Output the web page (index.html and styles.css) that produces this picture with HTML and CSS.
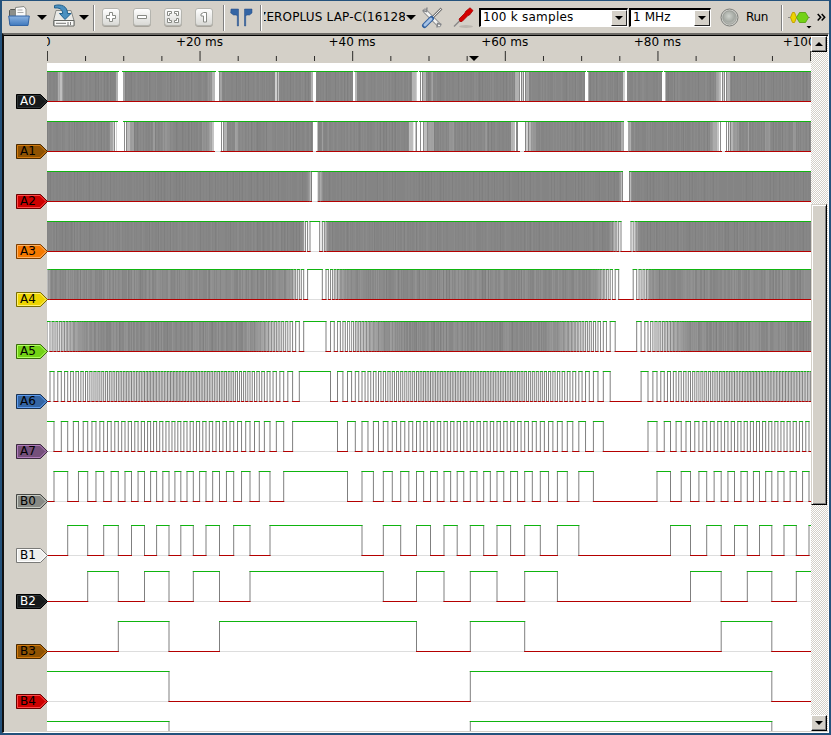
FILE: index.html
```html
<!DOCTYPE html>
<html lang="en">
<head>
<meta charset="utf-8">
<title>Logic analyzer</title>
<link rel="stylesheet" href="styles.css">
</head>
<body>
<div class="window">
  <div class="toolbar">
    <svg class="ico open" width="22" height="24" viewBox="0 0 22 24">
      <defs>
        <linearGradient id="gb" x1="0" y1="0" x2="0" y2="1"><stop offset="0" stop-color="#8db4e2"/><stop offset="1" stop-color="#3f78bd"/></linearGradient>
        <linearGradient id="gw" x1="0" y1="0" x2="0" y2="1"><stop offset="0" stop-color="#fff"/><stop offset="1" stop-color="#d8d8d4"/></linearGradient>
        <radialGradient id="gr" cx=".45" cy=".4" r=".6"><stop offset="0" stop-color="#ced2cc"/><stop offset=".7" stop-color="#a4a8a2"/><stop offset="1" stop-color="#bfc1bc"/></radialGradient>
      </defs>
      <path d="M1.500 19V5.500l1-1h6V7h9v12z" fill="#8c8e8a" stroke="#555753"/>
      <path d="M7.500 12V2.500L16 1.500l2 2.500V12z" fill="#fafafa" stroke="#888a85"/>
      <path d="M9.500 5h5M9.500 7.500h6" stroke="#aaa"/>
      <path d="M2 20.500L.7 11h20.600L20 20.500z" fill="url(#gb)" stroke="#3465a4" stroke-linejoin="round"/>
    </svg>
    <span class="caret c1"></span>
    <svg class="ico save" width="24" height="24" viewBox="0 0 24 24">
      <path d="M4 6.500h15l3 10v5H1.500v-5z" fill="#e9e9e6" stroke="#888a86"/>
      <path d="M2 16.500h20v5.500H2z" fill="#f8f8f6" stroke="#666864"/>
      <path d="M4 19.300h10M16 18v4M18.500 18v3" stroke="#777" stroke-width="1"/>
      <path d="M2.500 1.500C9-.2 15.500 2 15.500 9.500H19L13 15.500 7.500 9.500h3.200C10.500 5 7 3.500 2.500 4z" fill="#4a90c0" stroke="#20608c"/>
    </svg>
    <span class="caret c2"></span>
    <i class="sep s1"></i>
    <svg class="btn b1" width="18" height="18"><rect x=".5" y=".5" width="17" height="17" rx="2.500" fill="url(#gw)" stroke="#b4b4ae"/><path d="M7.500 4.500h3v3h3v3h-3v3h-3v-3h-3v-3h3z" fill="#fff" stroke="#888a85"/></svg>
    <svg class="btn b2" width="18" height="18"><rect x=".5" y=".5" width="17" height="17" rx="2.500" fill="url(#gw)" stroke="#b4b4ae"/><path d="M4.500 7.500h9v3h-9z" fill="#fff" stroke="#888a85"/></svg>
    <svg class="btn b3" width="18" height="18"><rect x=".5" y=".5" width="17" height="17" rx="2.500" fill="url(#gw)" stroke="#b4b4ae"/><path d="M3.500 3.500h4v2h-2v2h-2zM10.500 3.500h4v4h-2v-2h-2zM3.500 10.500h2v2h2v2h-4zM12.500 10.500h2v4h-4v-2h2z" fill="#fff" stroke="#888a85"/></svg>
    <svg class="btn b4" width="18" height="18"><rect x=".5" y=".5" width="17" height="17" rx="2.500" fill="url(#gw)" stroke="#b4b4ae"/><path d="M6 6l2.500-1.500h3v9.500h-3V8H6z" fill="#fff" stroke="#888a85"/></svg>
    <i class="sep s2"></i>
    <svg class="ico cur" width="23" height="20"><path d="M1 1h7.500v17H7.300V8.500L6.500 7H3.500L.7 5zM22 1h-7.500v17h1.200V8.500L16.500 7h3L22 5z" fill="#3465a4" stroke="#204a87" stroke-width=".5"/></svg>
    <i class="sep s3"></i>
    <div class="device"><span>ZEROPLUS LAP-C(16128)</span></div>
    <span class="caret c3"></span>
    <svg class="ico tools" width="22" height="22" viewBox="0 0 22 22">
      <path d="M4 4L18 18" stroke="#85878a" stroke-width="4.500" stroke-linecap="round"/>
      <path d="M4 4L18 18" stroke="#f2f2f0" stroke-width="2.600" stroke-linecap="round"/>
      <path d="M1.500 3.500l4 1 .5-4M20.500 17.500l-4-1-.5 4" fill="none" stroke="#85878a" stroke-width="1.500"/>
      <path d="M20.500 1.500L11 11" stroke="#777" stroke-width="2.600"/><path d="M20 2L11 11" stroke="#eee" stroke-width="1"/>
      <path d="M10.500 11.500L3.500 18.500" stroke="#2f5f9f" stroke-width="5" stroke-linecap="round"/>
      <path d="M10 12L4 18" stroke="#a5c2e6" stroke-width="3" stroke-linecap="round"/>
    </svg>
    <svg class="ico probe" width="21" height="22" viewBox="0 0 21 22">
      <ellipse cx="13" cy="19.500" rx="7" ry="1.500" fill="#bbb7b0"/>
      <path d="M1 19.500L9 11.500" stroke="#888" stroke-width="1.500"/>
      <path d="M7 14.500l-1-2.500 6-6 .5-1.500L17 .8 20 3.500 16.500 8l-1.500.5-6 6z" fill="#d40000" stroke="#a40000" stroke-width=".8"/>
    </svg>
    <div class="combo samples"><span>100 k samples</span><b><i class="caret"></i></b></div>
    <div class="combo rate"><span>1 MHz</span><b><i class="caret"></i></b></div>
    <svg class="ico led" width="19" height="19"><circle cx="9.500" cy="9.500" r="8.500" fill="#d2d2ce" stroke="#7c7e7a"/><circle cx="9.500" cy="9.500" r="6.800" fill="url(#gr)" stroke="#8d908a" stroke-width=".7"/></svg>
    <span class="run">Run</span>
    <i class="sep s4"></i>
    <svg class="ico dec" width="23" height="18"><path d="M0 6.500h22" stroke="#888"/><path d="M2.500 6.500l2-5h2l2 5-2 5h-2z" fill="#edd400" stroke="#c4a000"/><path d="M8.500 6.500l3-5h6l3 5-3 5h-6z" fill="#73d216" stroke="#4e9a06" stroke-width=".8"/><path d="M18.500 15h5l-2.500 2.500z" fill="#000"/></svg>
    <svg class="ico more" width="9" height="9"><path d="M.7 1l3 3.200-3 3.300M4.700 1l3 3.200-3 3.300" fill="none" stroke="#000" stroke-width="1.500"/></svg>
  </div>
  <div class="view">
    <div class="trace">
      <svg class="ruler" id="ruler" width="764" height="27"></svg>
      <div class="channels" id="channels"></div>
    </div>
    <div class="scroll">
      <div class="arrow"><i class="up"></i></div>
      <div class="thumb"></div>
      <div class="arrow end"><i class="caret"></i></div>
    </div>
  </div>
</div>
<script src="script.js"></script>
</body>
</html>
```
FILE: styles.css
```css
* { box-sizing: border-box; }
body { margin: 0; font: 12px "DejaVu Sans", sans-serif; color: #000; overflow: hidden; }
.window { width: 831px; height: 735px; background: #d4d0c8; border: 2px solid #24527c; border-top-width: 1px; display: flex; flex-direction: column; }
.toolbar { height: 32px; display: flex; align-items: center; flex: none; }
.toolbar > * { flex: none; }
svg { display: block; }
.caret { width: 0; height: 0; border: 5px solid transparent; border-top-color: #000; border-bottom: 0; display: block; }
.open { margin-left: 6px; margin-top: -1px; }
.c1 { margin-left: 7px; }
.save { margin-left: 5px; margin-top: -2px; }
.c2 { margin-left: 3px; }
.sep { width: 2px; height: 26px; background: #808080; border-right: 1px solid #fff; margin-top: 2px; }
.s1 { margin-left: 4px; }
.b1 { margin-left: 7px; }
.b2, .b3, .b4 { margin-left: 13px; }
.btn { filter: drop-shadow(0 1px 0 #a8a49c); }
.s2 { margin-left: 10px; }
.cur { margin-left: 5px; margin-top: 2px; }
.s3 { margin-left: 7px; }
.device { margin-left: 2px; width: 141px; overflow: hidden; white-space: nowrap; height: 16px; line-height: 16px; letter-spacing: .16px; }
.device span { margin-left: -6px; }
.c3 { margin-left: 1px; }
.tools { margin-left: 5px; margin-top: 1px; }
.probe { margin-left: 10px; margin-top: 1px; }
.combo { height: 19px; border: 2px solid #000; border-color: #000 #fff #fff #000; border-width: 2px 1px 1px 2px; background: #fff; display: flex; justify-content: space-between; margin-top: 1px; white-space: nowrap; line-height: 15px; padding-left: 2px; }
.combo b { width: 16px; background: #d4d0c8; border: 1px solid; border-color: #fff #222 #222 #fff; display: flex; align-items: center; justify-content: center; }
.combo .caret { border-width: 4px; border-bottom: 0; }
.samples { margin-left: 5px; width: 149px; letter-spacing: .25px; }
.rate { margin-left: 1px; width: 82px; letter-spacing: .1px; }
.led { margin-left: 9px; }
.run { margin-left: 7px; width: 25px; letter-spacing: -.3px; }
.s4 { margin-left: 10px; }
.dec { margin-left: 5px; margin-top: 5px; overflow: visible; }
.more { margin-left: 6px; }
.view { flex: 1; min-height: 0; display: flex; border-top: 2px solid #6d6b67; border-left: 2px solid #111; box-shadow: inset 0 1px 0 #000; padding-top: 1px; border-right: 1px solid #fff; border-bottom: 1px solid #fff; }
.trace { width: 807px; display: flex; flex-direction: column; overflow: hidden; }
.ruler { margin-left: 43px; flex: none; overflow: hidden; }
.ruler text { font: 12px "DejaVu Sans", sans-serif; text-anchor: middle; }
.channels { flex: 1; min-height: 0; overflow: hidden; margin-bottom: 1px; background: linear-gradient(90deg, #d4d0c8 43px, #fff 43px); padding-top: 8px; display: flex; flex-direction: column; gap: 19px; }
.row { display: flex; align-items: flex-end; height: 31px; flex: none; }
.raised { margin-top: -2px; }
.lowered { margin-top: 2px; }
.lowered-more { margin-top: 4px; }
.raised-more { margin-top: -4px; }
.flag { width: 32px; height: 15px; margin: 0 -1px -7px 12px; position: relative; z-index: 1; overflow: visible; flex: none; }
.flag text { font: 12px "DejaVu Sans", sans-serif; }
.wave { flex: none; overflow: hidden; }
.scroll { width: 17px; margin-bottom: 1px; display: flex; flex-direction: column; background: repeating-conic-gradient(#fff 0 25%, #d4d0c8 0 50%) 0 0 / 2px 2px; }
.arrow { height: 16px; width: 16px; background: #d4d0c8; border: 1px solid; border-color: #fff #000 #000 #fff; box-shadow: inset -1px -1px 0 #808080; display: flex; align-items: center; justify-content: center; }
.arrow.end { margin-top: auto; }
.arrow .caret { border-width: 4px; border-bottom: 0; }
.up { border: 4px solid transparent; border-bottom-color: #000; border-top: 0; }
.thumb { height: 301px; width: 16px; margin-top: 152px; background: #d4d0c8; border: 1px solid; border-color: #d4d0c8 #000 #000 #d4d0c8; box-shadow: inset 1px 1px 0 #fff, inset -1px -1px 0 #808080; }
```
FILE: script.js
```js
// 13-bit two's complement sine; every knot is [x, value].
const LEFT = 47, WIDTH = 764;
const segments = [
  // rising from trough
  [[14, -4096], [41, -3968], [46.5, -3940], [50, -3904], [54, -3840], [61.3, -3712], [67.7, -3584], [87.7, -3072], [103.7, -2560], [118.3, -2048], [131.5, -1536], [144.5, -1024], [156.6, -512], [169, 0], [180.8, 512], [193.3, 1024], [206, 1536], [219.5, 2048], [233.7, 2560], [250, 3072], [270, 3584], [283.7, 3840], [292.6, 3968], [299.3, 4032], [303.7, 4064], [307.6, 4080], [310, 4088], [315, 4096]],
  // falling from peak
  [[315, 4096], [319.7, 4088], [322.3, 4080], [326, 4064], [330.5, 4032], [337.5, 3968], [347.5, 3840], [362, 3584], [383.3, 3072], [400.7, 2560], [416.5, 2048], [430.5, 1536], [444, 1024], [457.2, 512], [470.3, 0], [483.7, -512], [497, -1024], [510.6, -1536], [524.7, -2048], [540.3, -2560], [557.4, -3072], [578.8, -3584], [593.4, -3840], [603.3, -3968], [610.2, -4032], [615.2, -4064], [618.7, -4080], [621, -4088], [626, -4096]],
  // rising again
  [[626, -4096], [631, -4088], [633.2, -4080], [636.7, -4064], [641.1, -4032], [648, -3968], [657, -3840], [670.5, -3584], [690.5, -3072], [706.7, -2560], [721.2, -2048], [734.5, -1536], [747.3, -1024], [759.5, -512], [771.8, 0], [784, 512], [796.3, 1024], [809, 1536], [822.5, 2048]]
];
const angle = v => Math.acos(Math.max(-1, Math.min(1, v / 4096)));

// Position at which a segment crosses a level, by cubic Hermite over the angle.
function crossing(seg, level) {
  const pts = seg.pts, t = angle(level), s = seg.dir;
  let i = 0;
  while (i < pts.length - 2 && s * (t - pts[i + 1][0]) > 0) i++;
  const a = pts[i], b = pts[i + 1];
  const h = b[0] - a[0], u = (t - a[0]) / h;
  if (u > 1.0001) return Infinity;
  const slope = j => {
    const p = pts[Math.max(0, j - 1)], q = pts[Math.min(pts.length - 1, j + 1)];
    return (q[1] - p[1]) / (q[0] - p[0]);
  };
  const u2 = u * u, u3 = u2 * u;
  return (2 * u3 - 3 * u2 + 1) * a[1] + (u3 - 2 * u2 + u) * h * slope(i) + (3 * u2 - 2 * u3) * b[1] + (u3 - u2) * h * slope(i + 1);
}
const model = segments.map((s, k) => ({
  dir: k === 1 ? 1 : -1, rising: k !== 1,
  pts: s.map(([x, v]) => [angle(v), x])
}));

// Spans where the fast bits stand still: [from, to, state]
const still = {
  0: [[118, 122.5, 0], [215.3, 219.3, 0], [313, 316, 1], [352.7, 355.2, 0], [417, 420, 0], [421, 422.3, 0], [519.7, 521, 1], [523.7, 525, 1], [585, 588, 0], [625, 627.3, 0], [662, 664.5, 0], [720.7, 722, 0], [725, 726.2, 0]],
  1: [[114.6, 115.6, 0], [117, 124, 0], [125.3, 126.3, 0], [214, 221.3, 1], [222.3, 223.2, 1], [312.6, 316.8, 1], [414, 415.2, 0], [417, 420, 0], [421.3, 423, 0], [515, 516.2, 1], [517.6, 518.4, 1], [519.4, 525, 1], [624, 628, 0], [719, 720, 1], [721, 726, 1], [727.3, 728.4, 0]]
};
// Spans where they toggle less often than once a pixel: [from, to, lightness]
const faint = {
  0: [[58, 60, .3], [60, 62.5, .45], [116, 118, .35], [123, 125, .25], [208, 212, .12], [212, 215, .4], [220, 222, .25], [275, 277, .6], [278, 279, .5], [311, 313, .35], [355, 357, .4], [412, 416, .4], [416, 417, .6], [423, 426, .35], [431, 433, .2], [515, 519, .35], [522, 523, .6], [526, 529, .3], [588, 589, .3], [623, 625, .6], [664, 666, .4], [716, 719, .25], [719, 721, .45], [723, 724, .6], [727, 730, .35]],
  1: [[110, 113, .25], [113, 114, .6], [115, 117, .65], [127, 130, .45], [130, 134, .18], [153, 155, .14], [163, 169, .1], [202, 209, .1], [209, 212, .25], [212, 214, .5], [224, 227, .35], [235, 238, .2], [317, 318, .5], [322, 323, .2], [409, 413, .45], [413, 414, .8], [415, 416, .5], [424, 427, .45], [428, 434, .22], [449, 454, .12], [485, 487, .12], [511, 515, .4], [526, 528, .6], [529, 531, .4], [531, 536, .15], [621, 624, .3], [628, 631, .3], [710, 713, .15], [713, 717, .3], [717, 719, .5], [729, 730, .7], [731, 733, .4], [733, 739, .15], [748, 749, .2], [765, 770, .12], [793, 796, .15]]
};

function edgesOf(bit) {
  const step = 2 ** bit, list = [];
  model.forEach(seg => {
    for (let level = -4096 + step; level < 4096; level += step) {
      const x = crossing(seg, level);
      if (x < LEFT || x > LEFT + WIDTH || !isFinite(x)) continue;
      const cell = Math.floor((seg.rising ? level : level - 1) / step);
      list.push([x, Math.abs(cell % 2)]);
    }
  });
  return list.sort((a, b) => a[0] - b[0]);
}

// Adds a span's share of each pixel column it touches.
function cover(cols, a, b) {
  for (let c = Math.max(0, Math.floor(a)); c < Math.min(WIDTH, b); c++) {
    cols[c] = Math.min(1, cols[c] + Math.max(0, Math.min(b, c + 1) - Math.max(a, c)));
  }
}

// One path per shade, so that overlapping edges never add up past full.
function columns(cols, y0, y1, color, strength) {
  const shades = {};
  for (let c = 0; c < WIDTH;) {
    const q = Math.round(cols[c] * 32);
    let e = c + 1;
    while (e < WIDTH && Math.round(cols[e] * 32) === q) e++;
    if (q) shades[q] = (shades[q] || '') + `M${c} ${y0}H${e}V${y1}H${c}z`;
    c = e;
  }
  return Object.keys(shades).map(q =>
    `<path d="${shades[q]}" fill="${color}" fill-opacity="${(q / 32 * strength).toFixed(3)}"/>`).join('');
}

// Repeatable pseudo-random grain in 0..1
const grain = (c, bit) => {
  const n = Math.sin(c * 12.9898 + bit * 78.233) * 43758.5453;
  return n - Math.floor(n);
};

function wave(bit) {
  const shownBit = Math.min(bit, 12);
  const gaps = still[bit] || [];
  const edges = edgesOf(shownBit).filter(([x]) => !gaps.some(g => x > g[0] && x < g[1]));
  gaps.forEach(g => edges.push([g[0], g[2]], [g[1], 1 - g[2]]));
  edges.sort((a, b) => a[0] - b[0]);
  const blank = () => new Array(WIDTH).fill(0);
  const level = [blank(), blank()], v = blank();
  let state = 1 - edges[0][1], from = 0;
  edges.forEach(([x, next]) => {
    const at = x - LEFT;
    cover(level[state], from - .5, at + .5);
    cover(v, at - .5, at + .5);
    from = at; state = next;
  });
  cover(level[state], from - .5, WIDTH);
  gaps.forEach(([a, b]) => {
    for (let c = Math.round(a - LEFT); c < Math.max(Math.round(b - LEFT), Math.round(a - LEFT) + 1); c++) v[c] = 0;
  });
  if (bit < 6) {
    const depth = [.06, .08, .04, .06, .14, .14][bit];
    for (let c = 0; c < WIDTH; c++) {
      if (v[c] > .9) v[c] -= depth * grain(c, bit) + (c % 3 ? .03 : 0);
    }
  }
  const haze = (faint[bit] || []).map(([a, b, o]) =>
    `<path d="M${a - LEFT} 1H${b - LEFT}V30H${a - LEFT}z" fill="#fff" opacity="${o}"/>`).join('');
  return `<svg class="wave" width="${WIDTH}" height="31">
    <path d="M0 30.5H${WIDTH}" stroke="#ddd"/>
    ${columns(v, 0, 31, '#000', .5)}${haze}
    ${columns(level[0], 30, 31, '#b40000', 1)}${columns(level[1], 0, 1, '#0fb40f', 1)}</svg>`;
}

const channels = [
  ['A0', '#16191a', '#2e3436', '#000'], ['A1', '#8f5202', '#d07a10', '#4a2a00'],
  ['A2', '#cc0000', '#ff4848', '#6a0000'], ['A3', '#f57900', '#ffb060', '#7d3e00'],
  ['A4', '#edd400', '#fff070', '#796c00'], ['A5', '#73d216', '#b0ff60', '#3a6b0b'],
  ['A6', '#3465a4', '#5e9cee', '#1a3354'], ['A7', '#75507b', '#b07cba', '#3c293f'],
  ['B0', '#888a85', '#c8ccc4', '#464744'], ['B1', '#eeeeec', '#ffffff', '#7a7a78'],
  ['B2', '#16191a', '#2e3436', '#000'], ['B3', '#8f5202', '#d07a10', '#4a2a00'],
  ['B4', '#cc0000', '#ff4848', '#6a0000'], ['', '', '', '']
];
const shift = { 4: 'raised', 5: 'lowered', 9: 'lowered-more', 10: 'raised-more' };
document.getElementById('channels').innerHTML = channels.map(([name, fill, light, edge], i) => {
  const fg = name === 'A0' || name === 'B2' ? '#fff' : '#000';
  const flag = name ? `<svg class="flag" viewBox="0 0 32 15">
    <path d="M.5 .5H24.5L31.5 7.5L24.5 14.5H.5z" fill="${fill}" stroke="${edge}"/>
    <path d="M1.5 1.5H24L30 7.5L24 13.5H1.5z" fill="none" stroke="${light}"/>
    <text x="4" y="11" fill="${fg}">${name}</text></svg>` : '<svg class="flag"></svg>';
  return `<div class="row ${shift[i] || ''}">${flag}${wave(i)}</div>`;
}).join('');

let ticks = '';
for (let i = 0; i <= 20; i++) {
  const x = .4 + i * 38.16;
  ticks += `<path d="M${x.toFixed(2)} ${i % 4 ? 20 : 15}V25" stroke="#000" stroke-opacity=".8"/>`;
  if (i % 4 === 0) ticks += `<text x="${x - .6}" y="10">${i ? '+' + i * 5 + ' ms' : '0'}</text>`;
}
ticks += '<path d="M422 20h10l-5 5z" fill="#000"/>';
document.getElementById('ruler').innerHTML = ticks;
```
